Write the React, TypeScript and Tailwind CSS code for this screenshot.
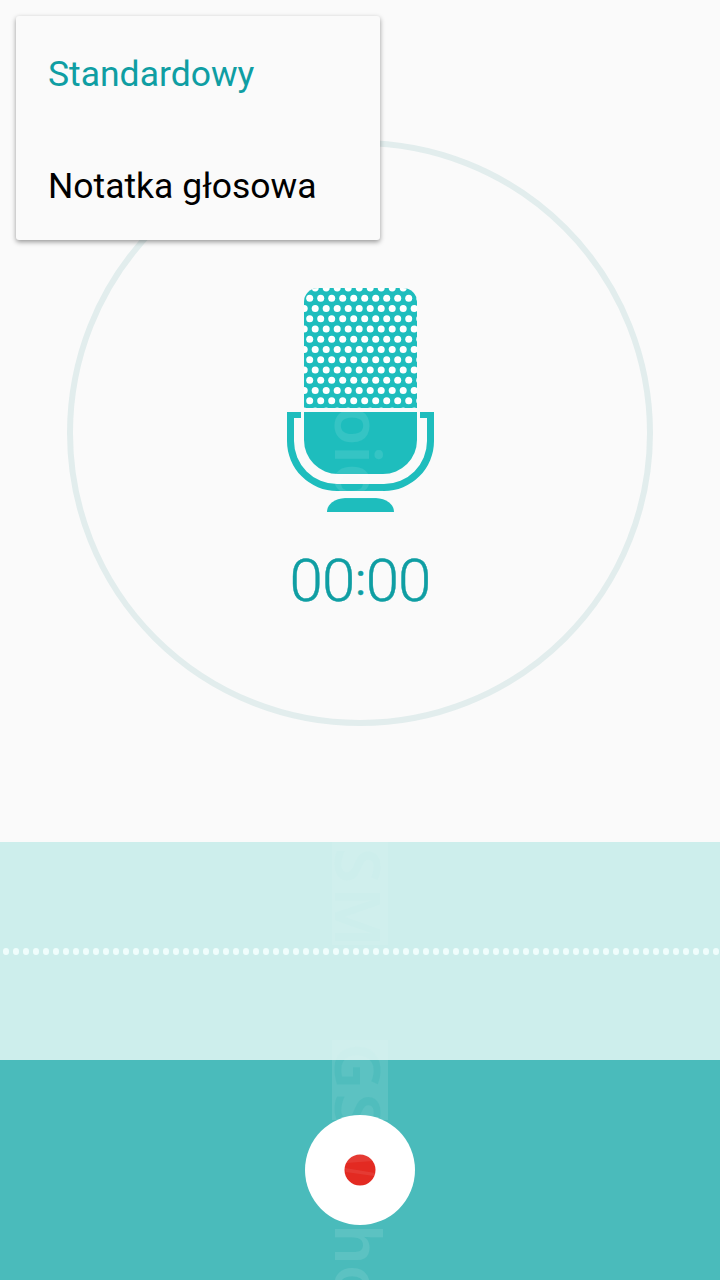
const waveDots = Array.from({ length: 72 }, (_, i) => i);

const headPath = "M304 408V302a14 14 0 0 1 14-14h85a14 14 0 0 1 14 14v106z";

// staggered holes of the mic grille
const grilleHoles: { x: number; y: number }[] = [];
for (let row = -1; row < 12; row++) {
  const y = 298.2 + row * 10.25;
  const start = row % 2 === 0 ? 299 : 304.5;
  for (let col = 0; col < 12; col++) {
    grilleHoles.push({ x: start + col * 11 - 0.3, y });
  }
}

function Microphone() {
  return (
    <svg width="148" height="225" viewBox="286 288 148 225" className="block">
      <defs>
        <clipPath id="head">
          <path d={headPath} />
        </clipPath>
      </defs>
      {/* head */}
      <path d={headPath} fill="#1ebdbd" />
      <g clipPath="url(#head)" fill="#ffffff">
        {grilleHoles.map((h) => (
          <circle key={`${h.x}-${h.y}`} cx={h.x} cy={h.y} r="3.5" />
        ))}
      </g>
      {/* lower body */}
      <path d="M304 412h113v28a34 34 0 0 1-34 34h-45a34 34 0 0 1-34-34z" fill="#1ebdbd" />
      {/* cradle */}
      <path d="M287 412h14v6h-7v23a43 43 0 0 0 43 43h47a43 43 0 0 0 43-43v-23h-7v-6h14v29a50 50 0 0 1-50 50h-47a50 50 0 0 1-50-50z" fill="#1ebdbd" />
      {/* stand */}
      <path d="M327 512a19 14 0 0 1 18-14h31a19 14 0 0 1 18 14z" fill="#1ebdbd" />
    </svg>
  );
}

function RecordDot() {
  return (
    <svg width="32" height="32" viewBox="0 0 32 32" className="block">
      <circle cx="16" cy="16" r="15.5" fill="#e32a22" />
      <path d="M2 9L29 7a15.5 15.5 0 0 0-26 0zM1 14l30 5-1 3-28-4z" fill="#ffffff" opacity="0.08" />
    </svg>
  );
}

export default function App() {
  return (
    <div className="relative w-[720px] h-[1280px] overflow-hidden bg-[#fafafa] font-['Roboto',sans-serif]">
      {/* Recorder face */}
      <div className="h-[842px] pt-[140px] flex justify-center">
        <div className="w-[586px] h-[586px] rounded-full border-[6px] border-[#e2eded] flex flex-col items-center pt-[142px]">
          <Microphone />
          <div className="mt-[30px] flex items-center h-[76px] text-[60px] font-light leading-none text-[#0f9ea3] tracking-[-1px] [-webkit-text-stroke:0.4px_#0f9ea3]">
            <span>00</span>
            <span className="text-[44px] font-normal px-[1px] -mt-[2px]">:</span>
            <span>00</span>
          </div>
        </div>
      </div>

      {/* Wave band */}
      <div className="relative h-[218px] bg-[#cdeeec] flex items-center pl-[3px] pt-[1px]">
        <div className="absolute left-[332px] top-0 w-[56px] h-[103px] bg-white/5" />
        <div className="absolute left-[332px] top-[198px] w-[56px] h-[20px] bg-white/5" />
        <span className="absolute left-[327px] top-[6px] [writing-mode:vertical-rl] font-['Noto_Sans',sans-serif] font-semibold text-[64px] leading-none tracking-[4px] text-[#cdeeec]">SM</span>
        <div className="relative flex gap-[4px]">
          {waveDots.map((d) => (
            <span key={d} className="w-[6px] h-[7px] rounded-full bg-[#effdfc]" />
          ))}
        </div>
      </div>

      {/* Controls */}
      <div className="relative h-[220px] bg-[#4abbbb] flex justify-center items-center">
        <div className="absolute left-[332px] top-0 w-[56px] h-[60px] bg-white/10" />
        <span className="absolute left-[327px] top-[164px] [writing-mode:vertical-rl] font-['Noto_Sans',sans-serif] font-semibold text-[64px] leading-none text-white/10">ho</span>
        <button className="relative z-10 w-[110px] h-[110px] rounded-full bg-white flex items-center justify-center">
          <RecordDot />
        </button>
      </div>

      {/* Watermark crossing the band edge */}
      <span className="absolute left-[327px] top-[1043px] [writing-mode:vertical-rl] font-['Noto_Sans',sans-serif] font-semibold text-[64px] leading-none tracking-[4px] text-transparent bg-clip-text bg-[linear-gradient(to_bottom,#cdeeec_17px,#50bdbd_17px)]">GS</span>

      {/* Watermark over the microphone */}
      <span className="absolute left-[327px] top-[406px] [writing-mode:vertical-rl] font-['Noto_Sans',sans-serif] font-semibold text-[64px] leading-none text-white/10 pointer-events-none">oid</span>

      {/* Mode menu */}
      <div className="absolute left-4 top-4 w-[364px] h-[224px] rounded-[3px] bg-[#fafafa] shadow-[0_2px_5px_rgba(0,0,0,0.4)] text-[35.5px]">
        <div className="h-[112px] flex items-center pl-[32px] pt-[5px] text-[#0f9ea3]">Standardowy</div>
        <div className="h-[112px] flex items-center pl-[32px] pt-[5px] text-black">Notatka głosowa</div>
      </div>
    </div>
  );
}
